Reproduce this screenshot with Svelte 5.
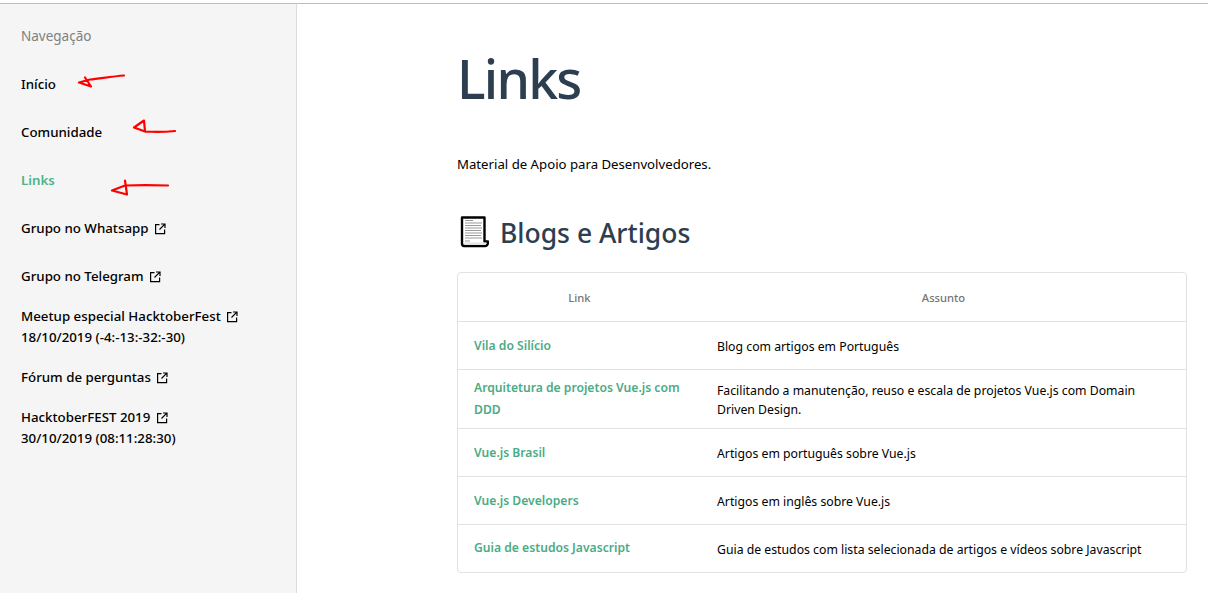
<script>
  const navLinks = [
    { label: "Início", top: true },
    { label: "Comunidade", top: true },
    { label: "Links", top: true, active: true },
    { label: "Grupo no Whatsapp", top: true, external: true },
    { label: "Grupo no Telegram", external: true },
    { label: "Meetup especial HacktoberFest", sub: "18/10/2019 (-4:-13:-32:-30)", external: true },
    { label: "Fórum de perguntas", external: true },
    { label: "HacktoberFEST 2019", sub: "30/10/2019 (08:11:28:30)", external: true }
  ];

  const rows = [
    { link: "Vila do Silício", text: "Blog com artigos em Português" },
    {
      link: "Arquitetura de projetos Vue.js com DDD",
      text: "Facilitando a manutenção, reuso e escala de projetos Vue.js com Domain Driven Design."
    },
    { link: "Vue.js Brasil", text: "Artigos em português sobre Vue.js" },
    { link: "Vue.js Developers", text: "Artigos em inglês sobre Vue.js" },
    { link: "Guia de estudos Javascript", text: "Guia de estudos com lista selecionada de artigos e vídeos sobre Javascript" }
  ];
</script>

<div class="page">
  <aside class="sidebar">
    <div class="nav-title">Navegação</div>
    <nav class="nav">
      {#each navLinks as item}
        <div class="nav-item" class:fixed={item.top} class:active={item.active}>
          <div>
            {item.label}
            {#if item.external}
              <svg class="ext" viewBox="0 0 12 12" fill="none" stroke="currentColor" stroke-width="1.2">
                <path d="M5.500 1.600H1.600v9h9V6.500" />
                <path d="M7 1h4v4M10.800 1.200 5.500 6.500" />
              </svg>
            {/if}
          </div>
          {#if item.sub}
            <div>{item.sub}</div>
          {/if}
        </div>
      {/each}
    </nav>
  </aside>

  <main class="content">
    <h1>Links</h1>
    <p class="intro">Material de Apoio para Desenvolvedores.</p>
    <h2>
      <svg class="scroll" viewBox="0 0 32 32">
        <path d="M5 1.500H27.500V25.500H31c0 3-1 4.500-3 4.500H7c-1.500 0-2-1-2-2.500z" fill="#fff" stroke="#000" stroke-width="2.400" stroke-linejoin="round" />
        <path d="M7 26.500h22.500c0 1.500-0.500 2.500-2 2.500H8z" fill="#e4e4e4" />
        <path d="M8 4.500h8M8 7h17M8 9.500h16M8 12h17M8 14.500h16M8 17h17M8 19.500h16M8 22h17M8 25h5" stroke="#9a9a9a" stroke-width="1.100" />
      </svg>
      <span class="h2-text">Blogs e Artigos</span>
    </h2>
    <div class="table-wrap">
      <table>
        <thead>
          <tr>
            <th class="col-link">Link</th>
            <th>Assunto</th>
          </tr>
        </thead>
        <tbody>
          {#each rows as row}
            <tr>
              <td class="link">{row.link}</td>
              <td>{row.text}</td>
            </tr>
          {/each}
        </tbody>
      </table>
    </div>
  </main>

  <!-- red marker arrows drawn over the screenshot -->
  <svg class="marks" viewBox="0 0 200 200" fill="none" stroke="#f00" stroke-width="2.200" stroke-linecap="round" stroke-linejoin="round">
    <path d="M124 75.500c-12 1-24 3-34 4l-11 3 12 4-6-9" />
    <path d="M175 131c-10 1-22 1-30 0.500l-1-11-10 7 11 4" />
    <path d="M168 185.500c-16-0.500-30-0.500-43 0l-13 5 15 4-2-14" />
  </svg>
</div>

<style>
  :global(body) {
    margin: 0;
    background: #fff;
  }

  .page {
    position: relative;
    display: flex;
    height: 590px;
    border-top: 3px solid transparent;
    overflow: hidden;
    font-family: "Noto Sans", "Open Sans", sans-serif;
    color: #000;
  }

  .sidebar {
    box-sizing: border-box;
    width: 297px;
    flex-shrink: 0;
    padding: 23px 0 0 21px;
    background: #f5f5f5;
    border-right: 1px solid #dcdcdc;
    border-top: 1px solid #bdbdbd;
    font-size: 13.300px;
  }

  .nav-title {
    height: 24px;
    line-height: 18px;
    color: #7f7f7f;
    font-size: 13.500px;
  }

  .nav {
    display: flex;
    flex-direction: column;
    padding-top: 23px;
  }

  .nav-item {
    line-height: 21px;
    font-weight: 500;
    margin-bottom: 19px;
  }

  .nav-item.fixed {
    margin-bottom: 27px;
  }

  .nav-item.active {
    color: #4db38a;
    font-weight: 600;
  }

  .ext {
    width: 12px;
    height: 12px;
    margin-left: 2px;
    vertical-align: -2px;
  }

  .content {
    box-sizing: border-box;
    flex: 1;
    padding: 1px 0 0 160px;
    border-top: 1px solid #bdbdbd;
  }

  h1 {
    margin: 0;
    height: 149px;
    padding-top: 36px;
    box-sizing: border-box;
    font-size: 53.500px;
    line-height: 76px;
    font-weight: 500;
    letter-spacing: -1.800px;
    color: #2c3e50;
  }

  .intro {
    margin: 0;
    font-size: 13.200px;
    line-height: 20px;
  }

  h2 {
    display: flex;
    align-items: center;
    gap: 11px;
    height: 40px;
    margin: 38px 0 20px;
    font-size: 26.500px;
    font-weight: 500;
    color: #2c3e50;
  }

  .h2-text {
    padding-top: 2px;
  }

  .scroll {
    width: 32px;
    height: 32px;
    flex-shrink: 0;
  }

  .table-wrap {
    width: 728px;
    border: 1px solid #e2e2e2;
    border-radius: 4px;
  }

  table {
    width: 100%;
    border-collapse: collapse;
    table-layout: fixed;
    font-size: 12.250px;
  }

  th {
    height: 48px;
    padding: 0;
    font-size: 11.200px;
    font-weight: 500;
    color: #757575;
    text-align: center;
  }

  .col-link {
    width: 243px;
  }

  td {
    height: 48px;
    padding: 8px 16px 6px;
    box-sizing: border-box;
    border-top: 1px solid #e2e2e2;
    line-height: 19px;
  }

  tr:last-child td {
    height: 47px;
  }

  td.link {
    padding: 7px 16px;
    font-size: 12.150px;
    color: #4bab85;
    font-weight: 600;
    line-height: 22px;
  }

  .marks {
    position: absolute;
    left: 0;
    top: -3px;
    width: 200px;
    height: 200px;
  }
</style>
